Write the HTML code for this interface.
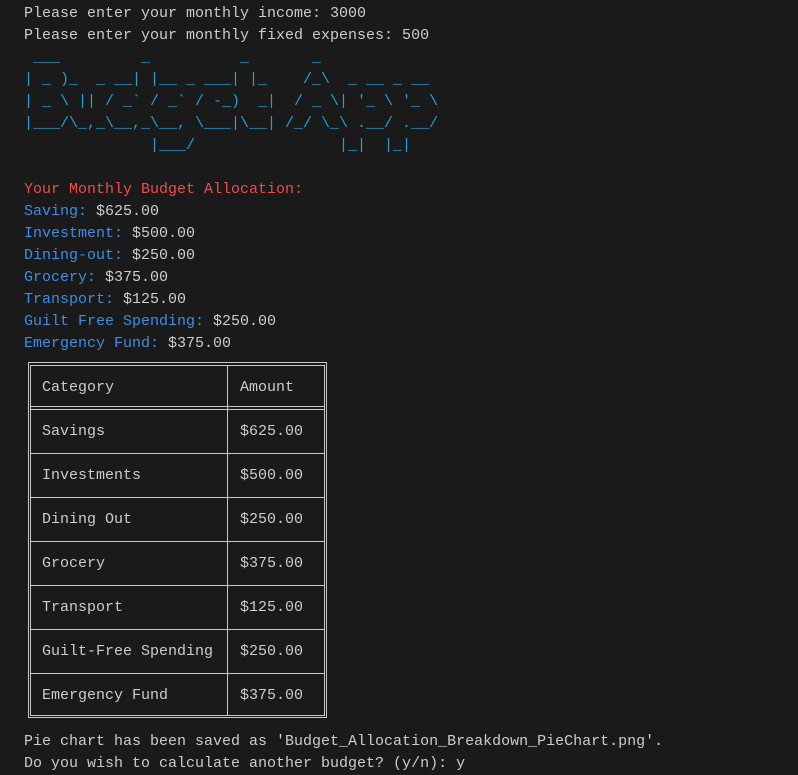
<!DOCTYPE html>
<html><head><style>
body{margin:0;background:#1a1a1a;width:798px;height:775px;overflow:hidden;position:relative;font-family:"Liberation Mono",monospace;font-size:15px;color:#cccccc}
pre{margin:0;position:absolute;left:24px;top:3px;font:inherit;line-height:22px;white-space:pre}
.b{color:#3b8eea}.r{color:#f14c4c}.c{color:#1aa3d9}
.h{position:absolute;background:#c8c8c8;height:1px}
.v{position:absolute;background:#c8c8c8;width:1px}
.t{position:absolute;line-height:22px;white-space:pre}
</style></head><body>
<pre>Please enter your monthly income: 3000
Please enter your monthly fixed expenses: 500
<span class="c"> ___         _          _       _
| _ )_  _ __| |__ _ ___| |_    /_\  _ __ _ __
| _ \ || / _` / _` / -_)  _|  / _ \| '_ \ '_ \
|___/\_,_\__,_\__, \___|\__| /_/ \_\ .__/ .__/
              |___/                |_|  |_|</span>

<span class="r">Your Monthly Budget Allocation:</span>
<span class="b">Saving:</span> $625.00
<span class="b">Investment:</span> $500.00
<span class="b">Dining-out:</span> $250.00
<span class="b">Grocery:</span> $375.00
<span class="b">Transport:</span> $125.00
<span class="b">Guilt Free Spending:</span> $250.00
<span class="b">Emergency Fund:</span> $375.00</pre>

<div class="h" style="left:28px;top:362px;width:298px"></div>
<div class="h" style="left:30px;top:365px;width:294px"></div>
<div class="h" style="left:30px;top:715px;width:294px"></div>
<div class="h" style="left:28px;top:717px;width:298px"></div>
<div class="v" style="left:28px;top:362px;height:356px"></div>
<div class="v" style="left:30px;top:365px;height:351px"></div>
<div class="v" style="left:324px;top:365px;height:351px"></div>
<div class="v" style="left:326px;top:362px;height:356px"></div>
<div class="v" style="left:227px;top:365px;height:351px"></div>
<div class="h" style="left:30px;top:406px;width:294px"></div>
<div class="h" style="left:30px;top:409px;width:294px"></div>
<div class="h" style="left:30px;top:453px;width:294px"></div>
<div class="h" style="left:30px;top:497px;width:294px"></div>
<div class="h" style="left:30px;top:541px;width:294px"></div>
<div class="h" style="left:30px;top:585px;width:294px"></div>
<div class="h" style="left:30px;top:629px;width:294px"></div>
<div class="h" style="left:30px;top:673px;width:294px"></div>

<div class="t" style="left:42px;top:377px">Category</div><div class="t" style="left:240px;top:377px">Amount</div>
<div class="t" style="left:42px;top:421px">Savings</div><div class="t" style="left:240px;top:421px">$625.00</div>
<div class="t" style="left:42px;top:465px">Investments</div><div class="t" style="left:240px;top:465px">$500.00</div>
<div class="t" style="left:42px;top:509px">Dining Out</div><div class="t" style="left:240px;top:509px">$250.00</div>
<div class="t" style="left:42px;top:553px">Grocery</div><div class="t" style="left:240px;top:553px">$375.00</div>
<div class="t" style="left:42px;top:597px">Transport</div><div class="t" style="left:240px;top:597px">$125.00</div>
<div class="t" style="left:42px;top:641px">Guilt-Free Spending</div><div class="t" style="left:240px;top:641px">$250.00</div>
<div class="t" style="left:42px;top:685px">Emergency Fund</div><div class="t" style="left:240px;top:685px">$375.00</div>

<div class="t" style="left:24px;top:731px">Pie chart has been saved as 'Budget_Allocation_Breakdown_PieChart.png'.</div>
<div class="t" style="left:24px;top:753px">Do you wish to calculate another budget? (y/n): y</div>
</body></html>
